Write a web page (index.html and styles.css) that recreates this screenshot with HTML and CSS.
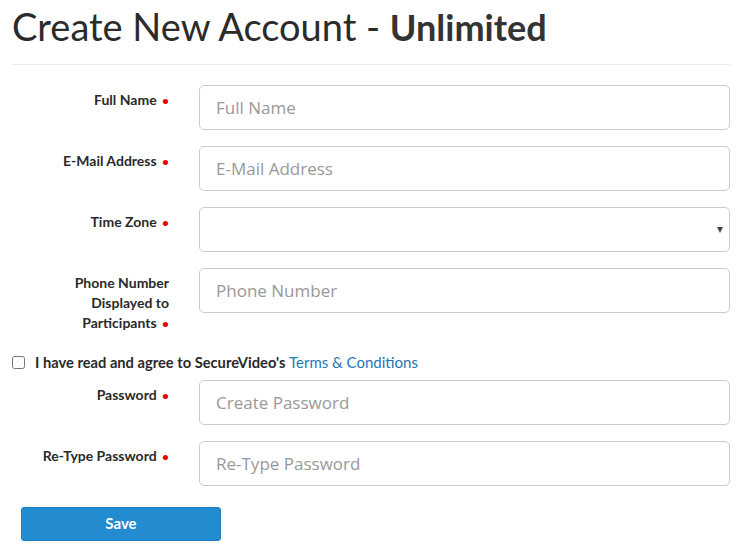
FILE: index.html
```html
<!DOCTYPE html>
<html>
<head>
<meta charset="utf-8">
<link rel="stylesheet" href="styles.css">
</head>
<body>
<div class="page">
  <h1 class="title">Create New Account - <span class="plan">Unlimited</span></h1>
  <hr class="rule">
  <form class="form">
    <div class="row">
      <label class="label">Full Name <span class="req">•</span></label>
      <input class="input" type="text" placeholder="Full Name">
    </div>
    <div class="row">
      <label class="label">E-Mail Address <span class="req">•</span></label>
      <input class="input" type="text" placeholder="E-Mail Address">
    </div>
    <div class="row">
      <label class="label">Time Zone <span class="req">•</span></label>
      <div class="select">
        <span class="arrow"></span>
      </div>
    </div>
    <div class="row">
      <label class="label label-narrow">Phone Number Displayed to Participants <span class="req">•</span></label>
      <input class="input" type="text" placeholder="Phone Number">
    </div>
    <div class="check-row">
      <input class="check" type="checkbox">
      <span class="check-text">I have read and agree to SecureVideo's <a class="link" href="#">Terms &amp; Conditions</a></span>
    </div>
    <div class="row">
      <label class="label">Password <span class="req">•</span></label>
      <input class="input" type="password" placeholder="Create Password">
    </div>
    <div class="row">
      <label class="label">Re-Type Password <span class="req">•</span></label>
      <input class="input" type="password" placeholder="Re-Type Password">
    </div>
    <button class="save" type="button">Save</button>
  </form>
</div>
</body>
</html>
```
FILE: styles.css
```css
* { box-sizing: border-box; }
body {
  margin: 0;
  background: #fff;
  font-family: "Lato", "Open Sans", sans-serif;
  color: #333;
}
.page {
  padding: 0 18px 0 12px;
}
.title {
  margin: 0;
  padding-top: 4px;
  height: 56px;
  font-family: "Lato", sans-serif;
  font-weight: 400;
  font-size: 38px;
  line-height: 44px;
  color: #2b2b2b;
}
.plan {
  font-weight: 700;
  font-size: 36px;
  color: #333;
}
.rule {
  margin: 8px 0 20px 0;
  border: 0;
  border-top: 1px solid #eaeaea;
}
.row {
  display: grid;
  grid-template-columns: 172px 1fr;
  column-gap: 15px;
  align-items: start;
  margin-bottom: 16px;
}
.label {
  padding: 5px 15px 0 0;
  text-align: right;
  font-weight: 700;
  font-size: 14px;
  line-height: 20px;
  color: #2a2a2a;
  white-space: nowrap;
}
.label-narrow {
  padding-left: 49px;
  white-space: normal;
}
.req {
  color: #e60000;
  font-size: 12px;
  margin-left: 2px;
}
.input, .select {
  height: 45px;
  width: 100%;
  border: 1px solid #ccc;
  border-radius: 5px;
  padding: 0 16px;
  font-family: "Open Sans", sans-serif;
  font-size: 17px;
  color: #555;
  background: #fff;
  outline: none;
}
.input::placeholder { color: #999; }
.select {
  position: relative;
}
.arrow {
  position: absolute;
  right: 6px;
  top: 19px;
  width: 0;
  height: 0;
  border-left: 3.5px solid transparent;
  border-right: 3.5px solid transparent;
  border-top: 6px solid #444;
}
.check-row {
  display: flex;
  align-items: center;
  height: 24px;
  margin: 3px 0 6px 0;
}
.check {
  margin: 0 10px 0 0;
  width: 13px;
  height: 13px;
}
.check-text {
  font-weight: 700;
  font-size: 14.7px;
  color: #2a2a2a;
}
.link {
  font-weight: 400;
  font-size: 15px;
  color: #1f75b8;
  text-decoration: none;
}
.save {
  display: block;
  margin: 21px 0 0 9px;
  width: 200px;
  height: 34px;
  border: 1px solid #1f7fc2;
  border-radius: 3px;
  background: #238bd0;
  color: #fff;
  font-family: "Lato", sans-serif;
  font-weight: 700;
  font-size: 15px;
  padding-bottom: 3px;
}
```
